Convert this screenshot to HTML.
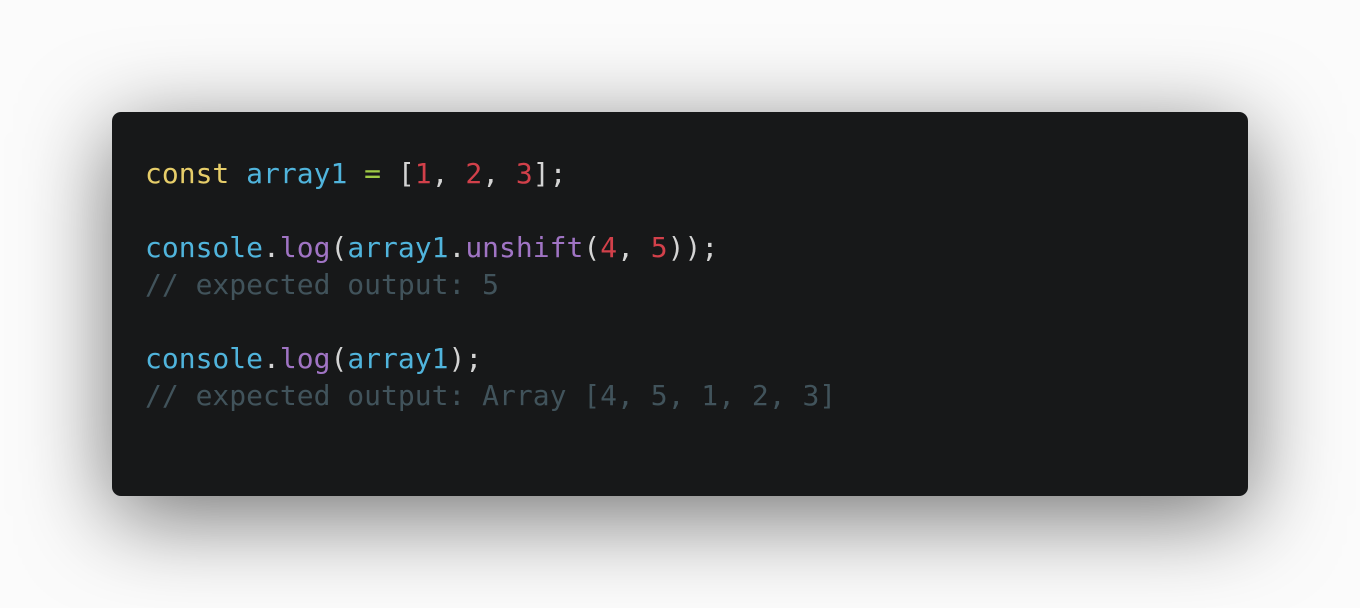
<!DOCTYPE html>
<html><head><style>
html,body{margin:0;padding:0;width:1360px;height:608px;background:#fbfbfb;overflow:hidden}
.card{position:absolute;left:112px;top:112px;width:1136px;height:384px;background:#171819;border-radius:9px;box-shadow:0 20px 90px rgba(0,0,0,0.55)}
pre{position:absolute;left:33px;top:43px;margin:0;font-family:"DejaVu Sans Mono","Liberation Mono",monospace;font-size:28px;line-height:37px;color:#d4d4d4}
.k{color:#e6cd69}.v{color:#50b4dc}.o{color:#9fca45}.n{color:#d2404a}.f{color:#a074c4}.c{color:#41535b}
</style></head><body>
<div class="card"><pre><span class="k">const</span> <span class="v">array1</span> <span class="o">=</span> [<span class="n">1</span>, <span class="n">2</span>, <span class="n">3</span>];

<span class="v">console</span>.<span class="f">log</span>(<span class="v">array1</span>.<span class="f">unshift</span>(<span class="n">4</span>, <span class="n">5</span>));
<span class="c">// expected output: 5</span>

<span class="v">console</span>.<span class="f">log</span>(<span class="v">array1</span>);
<span class="c">// expected output: Array [4, 5, 1, 2, 3]</span></pre></div>
</body></html>
